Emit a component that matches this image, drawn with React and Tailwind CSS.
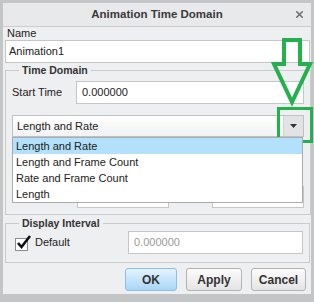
import React from 'react';
import { X } from 'lucide-react';

const font = { fontFamily: '"Liberation Sans", Arial, sans-serif' };

const Field = ({ value, className = '', muted }) => (
  <div
    className={`h-[23px] border border-[#c4c6c8] bg-white flex items-center px-[5px] text-[11px] ${
      muted ? 'text-[#9a9a9a]' : 'text-[#222]'
    } ${className}`}
  >
    {value}
  </div>
);

const Button = ({ children, primary, className = '' }) => (
  <button
    className={`h-[23px] rounded-[3px] border text-[12px] font-bold text-[#333] ${
      primary
        ? 'border-[#8cc0ec] bg-gradient-to-b from-[#e3f3fe] to-[#a8d6f6]'
        : 'border-[#b3b3b3] bg-gradient-to-b from-[#fcfcfc] to-[#e4e4e4]'
    } ${className}`}
  >
    {children}
  </button>
);

export default function App() {
  const options = ['Length and Rate', 'Length and Frame Count', 'Rate and Frame Count', 'Length'];

  return (
    <div className="relative w-[314px] h-[302px] bg-[#c3c5c7] pt-[3px] pl-[3px] pr-[3px] pb-[8px]" style={font}>
      <div className="flex flex-col h-full bg-[#eeeff0]">
        {/* title bar */}
        <div className="relative h-[24px] flex items-center justify-center bg-[#e8e9ea] border-b border-[#cbcdcf]">
          <span className="text-[11.5px] font-bold text-[#3a3a3a]">Animation Time Domain</span>
          <X size={11} strokeWidth={3.5} className="absolute right-[6px] top-[6px] text-[#707070]" />
        </div>

        <div className="pl-[2px] pr-[1px]">
          <div className="h-[12px] flex items-center pl-[2px] text-[11px] text-[#222]">Name</div>
          <Field value="Animation1" className="h-[22px] mt-[1px] pl-[3px]" />

          {/* Time Domain group */}
          <fieldset className="relative mt-[0px] border border-[#c9cbcd] pl-[6px] pr-[6px] pb-[6px]">
            <legend className="ml-[7px] px-[3px] text-[10.5px] font-bold text-[#333] leading-[14px]">
              Time Domain
            </legend>
            <div className="mt-[4px] flex items-center">
              <span className="w-[64px] text-[11px] text-[#222]">Start Time</span>
              <Field value="0.000000" className="flex-1" />
            </div>

            <div className="relative mt-[11px]">
              <div className="h-[22px] flex items-center border border-[#bfc1c3] bg-gradient-to-b from-[#ffffff] to-[#f1f2f3] pl-[4px] text-[11px] text-[#222]">
                <span className="flex-1">Length and Rate</span>
                <div className="w-[20px] h-full flex items-center justify-center bg-[#e2e3e4] border-l border-[#d0d2d4]">
                  <svg width="7" height="4" viewBox="0 0 7 4">
                    <path d="M0 0h7L3.5 4z" fill="#333" />
                  </svg>
                </div>
              </div>

              {/* open dropdown list */}
              <div className="absolute left-0 right-[1px] top-[22px] z-10 border border-[#a9abad] bg-white">
                {options.map((o, i) => (
                  <div
                    key={o}
                    className={`h-[16px] flex items-center pl-[3px] text-[11px] text-[#222] ${
                      i === 0 ? 'bg-[#b3e0fa]' : ''
                    }`}
                  >
                    {o}
                  </div>
                ))}
              </div>
            </div>

            <div className="mt-[49px] flex">
              <div className="ml-[65px] w-[92px] h-[22px] border border-[#c4c6c8] bg-white" />
              <div className="ml-[43px] w-[92px] h-[22px] border border-[#c4c6c8] bg-white" />
            </div>
          </fieldset>

          {/* Display Interval group */}
          <fieldset className="mt-[1px] border border-[#c9cbcd] pl-[9px] pr-[6px] pb-[8px]">
            <legend className="ml-[4px] px-[3px] text-[10.5px] font-bold text-[#333] leading-[14px]">
              Display Interval
            </legend>
            <div className="mt-[1px] flex items-center">
              <div className="w-[113px] flex items-center">
                <div className="relative w-[13px] h-[13px] border border-[#8c8c8c] bg-white mt-[3px]">
                  <svg width="16" height="16" viewBox="0 0 16 16" className="absolute left-[0px] top-[-5px]">
                    <path d="M2 9l3.5 4L14 2" fill="none" stroke="#111" strokeWidth="2.6" />
                  </svg>
                </div>
                <span className="ml-[7px] text-[11px] text-[#222]">Default</span>
              </div>
              <Field value="0.000000" muted className="flex-1 h-[21px]" />
            </div>
          </fieldset>
        </div>

        {/* footer */}
        <div className="flex-1 flex items-center justify-end gap-[9px] pr-[5px] pt-[2px]">
          <Button primary className="w-[52px]">OK</Button>
          <Button className="w-[56px]">Apply</Button>
          <Button className="w-[55px]">Cancel</Button>
        </div>
      </div>

      {/* green annotation */}
      <svg className="absolute left-0 top-0 pointer-events-none" width="314" height="302" viewBox="0 0 314 302">
        <polygon
          points="284,40 300,40 300,64 310,64 292,102 274,64 284,64"
          fill="none"
          stroke="#22b14c"
          strokeWidth="4"
        />
        <rect x="278.5" y="108.5" width="33" height="33" fill="none" stroke="#22b14c" strokeWidth="3" />
      </svg>
    </div>
  );
}
